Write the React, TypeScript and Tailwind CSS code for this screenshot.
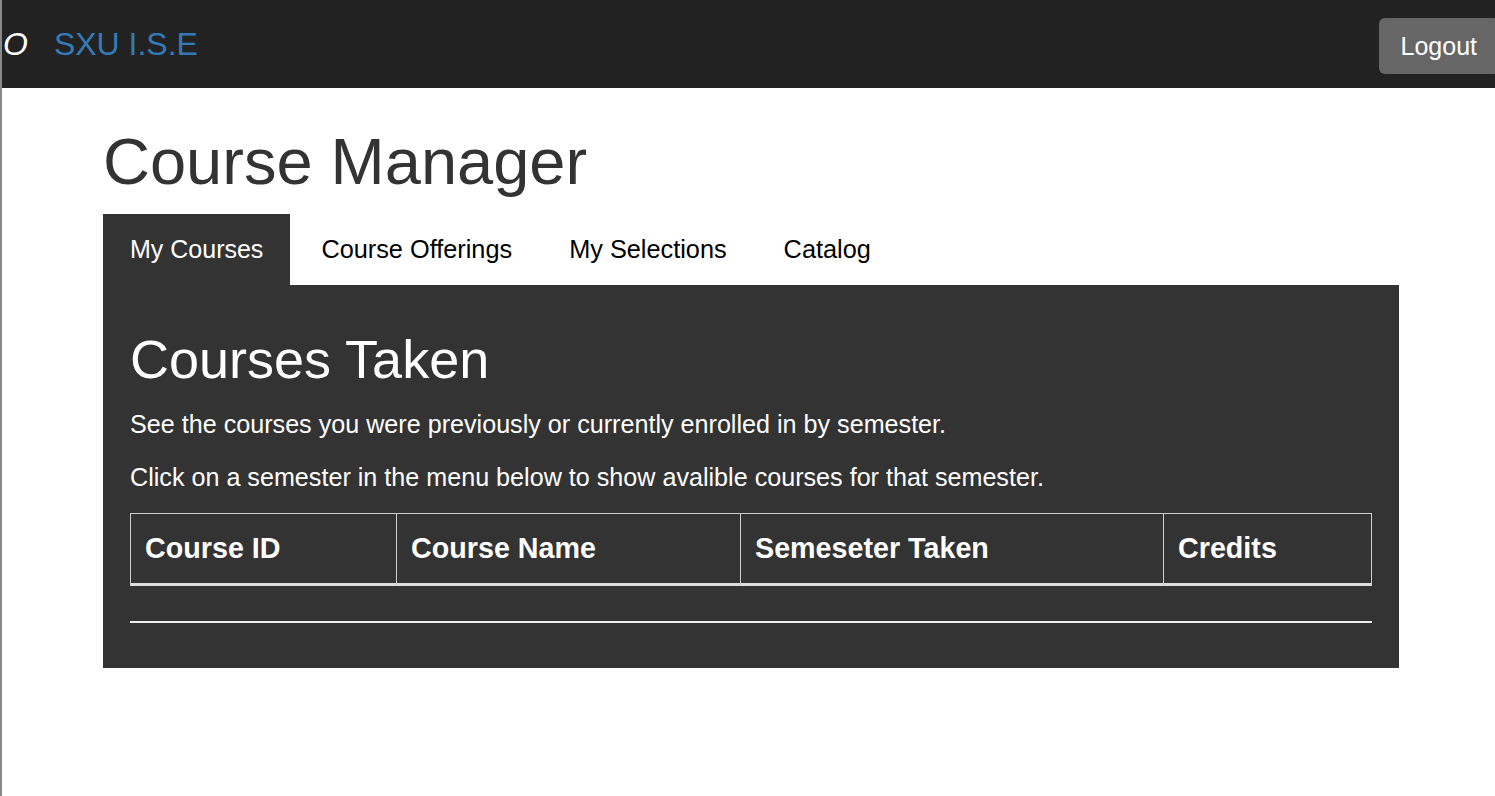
import React from "react";

const font = { fontFamily: '"Liberation Sans", Arial, sans-serif' };

export default function App() {
  const tabs = ["My Courses", "Course Offerings", "My Selections", "Catalog"];
  const cols: { label: string; w: string }[] = [
    { label: "Course ID", w: "w-[266px]" },
    { label: "Course Name", w: "w-[344px]" },
    { label: "Semeseter Taken", w: "w-[423px]" },
    { label: "Credits", w: "flex-1" },
  ];
  return (
    <div
      className="min-h-[796px] w-[1495px] overflow-hidden border-l-2 border-[#888888] bg-white"
      style={font}
    >
      <nav className="flex h-[88px] items-center overflow-hidden bg-[#222222] pl-[1px]">
        <span className="text-[32px] italic leading-[32px] text-white">O</span>
        <span className="ml-[26px] text-[32px] leading-[32px] text-[#337ab7]">SXU I.S.E</span>
        <div className="flex-1" />
        <button className="mr-[-4px] mt-[3px] h-[56px] rounded-[6px] bg-[#666666] px-[22px] text-[25px] leading-[36px] text-white">
          Logout
        </button>
      </nav>

      <main className="ml-[101px] w-[1296px]">
        <h1 className="mt-[38px] text-[65px] leading-[72px] text-[#333333]">Course Manager</h1>

        <ul className="mt-[16px] flex">
          {tabs.map((t, i) => (
            <li
              key={t}
              className={
                i === 0
                  ? "mr-[4px] bg-[#333333] px-[27px] pb-[18px] pt-[17px] text-[25px] leading-[36px] text-white"
                  : "mr-[3px] px-[27px] pb-[18px] pt-[17px] text-[25.3px] leading-[36px] text-black"
              }
            >
              {t}
            </li>
          ))}
        </ul>

        <section className="bg-[#333333] px-[27px] pb-[45px] pt-[44px] text-white">
          <h2 className="text-[54px] leading-[60px]">Courses Taken</h2>
          <p className="mt-[17px] text-[25.15px] leading-[36px]">
            See the courses you were previously or currently enrolled in by semester.
          </p>
          <p className="mt-[17px] text-[25.15px] leading-[36px]">
            Click on a semester in the menu below to show avalible courses for that semester.
          </p>

          <div className="mt-[18px] flex border-l border-t border-[#cccccc]">
            {cols.map((c) => (
              <div
                key={c.label}
                className={`${c.w} border-b-[3px] border-r border-b-[#dddddd] border-r-[#cccccc] px-[14px] py-[14px] text-[28.7px] font-bold leading-[41px]`}
              >
                {c.label}
              </div>
            ))}
          </div>

          <div className="mt-[35px] h-[2px] bg-[#eeeeee]" />
        </section>
      </main>
    </div>
  );
}
